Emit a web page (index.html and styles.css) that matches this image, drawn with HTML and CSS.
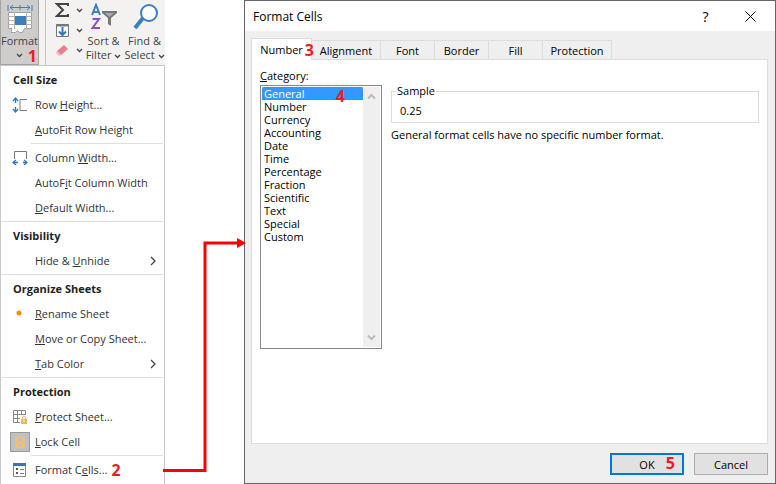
FILE: index.html
```html
<!DOCTYPE html>
<html lang="en">
<head>
  <meta charset="UTF-8">
  <meta name="viewport" content="width=device-width, initial-scale=1.0">
  <title>Format Cells</title>
  <link rel="stylesheet" href="styles.css">
</head>
<body>
  <div class="page">
    <div class="left">
      <!-- Ribbon -->
      <div class="ribbon">
        <button class="format-btn">
          <svg width="28" height="32" viewBox="0 0 28 32">
            <path d="M2 3v6M26 3v6M4 5.500h20M7 3L4 5.500 7 8M21 3l3 2.500L21 8M14 3v5" fill="none" stroke="#3c7ebf"/>
            <path d="M2.500 10.500h23v16h-7l-2 4h-3l-2-2-2 2H5l1-4H2.500z" fill="#fff" stroke="#a3a19f"/>
            <path d="M2 14.500h24M2 22.500h24M8.500 10v17M20.500 10v17M2 18.500h24" stroke="#b5b3b1"/>
            <path d="M9 14h11v9H9z" fill="#3c7ebf"/>
          </svg>
          <span>Format</span>
          <svg class="chev" width="7" height="5" viewBox="0 0 7 5"><path d="M1 1l2.500 2.500L6 1"/></svg>
          <b class="mark mark-1">1</b>
        </button>
        <div class="ribbon-tools">
          <button class="tool" aria-label="AutoSum">
            <svg width="15" height="16" viewBox="0 0 15 16"><path d="M13 4V2H2l6 6-6 6h11v-2" fill="none" stroke="#444" stroke-width="2"/></svg>
            <svg class="chev" width="7" height="5" viewBox="0 0 7 5"><path d="M1 1l2.500 2.500L6 1"/></svg>
          </button>
          <button class="tool" aria-label="Fill">
            <svg width="15" height="16" viewBox="0 0 15 16"><path d="M1.500 2.500h12v12h-12z" fill="#fff" stroke="#777"/><path d="M1.500 3.500h12" stroke="#777" stroke-width="2"/><path d="M7.500 5v8M4 9.500L7.500 13 11 9.500" fill="none" stroke="#2f78bd" stroke-width="2"/></svg>
            <svg class="chev" width="7" height="5" viewBox="0 0 7 5"><path d="M1 1l2.500 2.500L6 1"/></svg>
          </button>
          <button class="tool" aria-label="Clear">
            <svg width="15" height="16" viewBox="0 0 15 16"><path d="M2 9l7-6 4 4-7 6z" fill="#e8808c"/><path d="M2 9l4 4-2 1-3-3z" fill="#f3b4bb"/></svg>
            <svg class="chev" width="7" height="5" viewBox="0 0 7 5"><path d="M1 1l2.500 2.500L6 1"/></svg>
          </button>
        </div>
        <button class="big-tool">
          <svg width="28" height="28" viewBox="0 0 28 28">
            <path d="M2 12L6 2l4 10M3.500 9h5" fill="none" stroke="#3c7ebf" stroke-width="2"/>
            <path d="M2.500 16H9L2.500 25H10" fill="none" stroke="#8b4fbf" stroke-width="2"/>
            <path d="M12 8h15v2l-6 5v8l-3-2v-6l-6-5z" fill="#777"/><path d="M15 10h9l-4.500 4z" fill="#aaa"/>
          </svg>
          <span>Sort &amp;</span>
          <span>Filter <svg class="chev" width="7" height="5" viewBox="0 0 7 5"><path d="M1 1l2.500 2.500L6 1"/></svg></span>
        </button>
        <button class="big-tool">
          <svg width="28" height="28" viewBox="0 0 28 28">
            <path d="M12 15L4 25" stroke="#3c7ebf" stroke-width="4"/>
            <circle cx="18" cy="10" r="8" fill="#fff" stroke="#3c7ebf" stroke-width="2"/>
          </svg>
          <span>Find &amp;</span>
          <span>Select <svg class="chev" width="7" height="5" viewBox="0 0 7 5"><path d="M1 1l2.500 2.500L6 1"/></svg></span>
        </button>
      </div>

      <!-- Format menu -->
      <div class="menu" role="menu">
        <h2>Cell Size</h2>
        <button class="item" role="menuitem">
          <svg class="icon" width="16" height="16" viewBox="0 0 16 16"><path d="M15 2.500H8v11h7" fill="none" stroke="#777"/><path d="M3.500 2v4M1 4l2.500-3L6 4M3.500 14v-4M1 12l2.500 3L6 12" fill="none" stroke="#2f78bd" stroke-width="1.300"/></svg>
          <span>Row <u>H</u>eight...</span>
        </button>
        <button class="item" role="menuitem"><span><u>A</u>utoFit Row Height</span></button>
        <hr class="short">
        <button class="item" role="menuitem">
          <svg class="icon" width="16" height="16" viewBox="0 0 16 16"><path d="M2.500 9V1.500h12V9" fill="none" stroke="#777"/><path d="M2 12.500h4M4 10l-3 2.500L4 15M15 12.500h-4M12 10l3 2.500L12 15" fill="none" stroke="#2f78bd" stroke-width="1.300"/></svg>
          <span>Column <u>W</u>idth...</span>
        </button>
        <button class="item" role="menuitem"><span>AutoF<u>i</u>t Column Width</span></button>
        <button class="item" role="menuitem"><span><u>D</u>efault Width...</span></button>
        <hr>
        <h2>Visibility</h2>
        <button class="item" role="menuitem">
          <span>Hide &amp; <u>U</u>nhide</span>
          <svg class="arrow" width="7" height="10" viewBox="0 0 7 10"><path d="M1 1l4 4-4 4"/></svg>
        </button>
        <hr>
        <h2>Organize Sheets</h2>
        <button class="item" role="menuitem">
          <svg class="icon" width="16" height="16" viewBox="0 0 16 16"><circle cx="7" cy="7" r="2.500" fill="#ff8c00"/></svg>
          <span><u>R</u>ename Sheet</span>
        </button>
        <button class="item" role="menuitem"><span><u>M</u>ove or Copy Sheet...</span></button>
        <button class="item" role="menuitem">
          <span><u>T</u>ab Color</span>
          <svg class="arrow" width="7" height="10" viewBox="0 0 7 10"><path d="M1 1l4 4-4 4"/></svg>
        </button>
        <hr>
        <h2>Protection</h2>
        <button class="item" role="menuitem">
          <svg class="icon" width="16" height="16" viewBox="0 0 16 16"><path d="M1.500 1.500h12v12h-12zM1.500 5.500h12M1.500 9.500h12M5.500 1v13M9.500 1v13" fill="none" stroke="#888"/><path d="M8 6h8v10H8z" fill="#fff"/><path d="M9 10h6v5H9z" fill="#eab560"/><path d="M10.500 10V8q1.500-2 3 0v2" fill="none" stroke="#eab560"/><path d="M12 11v2" stroke="#fff"/></svg>
          <span><u>P</u>rotect Sheet...</span>
        </button>
        <button class="item" role="menuitem">
          <svg class="icon icon-on" width="18" height="18" viewBox="0 0 18 18"><path d="M4 8h10v7H4z" fill="#ecc07c"/><path d="M6 8V5q3-4 6 0v3" fill="none" stroke="#ecc07c" stroke-width="2"/><path d="M9 10v3" stroke="#c0c0c0" stroke-width="2"/></svg>
          <span><u>L</u>ock Cell</span>
        </button>
        <hr class="short">
        <button class="item" role="menuitem">
          <svg class="icon" width="16" height="16" viewBox="0 0 16 16"><path d="M1.500 1.500h12v13h-12z" fill="#fff" stroke="#888"/><path d="M1 1h13v3H1z" fill="#2f78bd"/><path d="M4 6h2v2H4zM4 10h2v2H4z" fill="#555"/><path d="M8 7.500h4M8 11.500h4" stroke="#777"/></svg>
          <span>Format C<u>e</u>lls...</span>
          <b class="mark mark-2">2</b>
        </button>
      </div>
    </div>

    <!-- Arrow from the menu to the dialog -->
    <div class="link">
      <svg class="link-arrow" width="83" height="236" viewBox="0 0 83 236">
        <path d="M0 232.500h42V5h33" fill="none" stroke="#f00" stroke-width="3"/>
        <path d="M74 0l9 5-9 5z" fill="#f00"/>
      </svg>
    </div>

    <!-- Dialog -->
    <div class="dialog" role="dialog" aria-labelledby="dialogTitle">
      <div class="titlebar">
        <h1 id="dialogTitle">Format Cells</h1>
        <button class="title-btn" aria-label="Help">?</button>
        <button class="title-btn" aria-label="Close">
          <svg width="11" height="11" viewBox="0 0 11 11"><path d="M.5.500l10 10M10.500.500l-10 10" stroke="#000"/></svg>
        </button>
      </div>
      <div class="content">
        <div class="tabs" role="tablist">
          <button class="tab active" role="tab" aria-selected="true">Number<b class="mark mark-3">3</b></button>
          <button class="tab tab-wide" role="tab">Alignment</button>
          <button class="tab" role="tab">Font</button>
          <button class="tab" role="tab">Border</button>
          <button class="tab" role="tab">Fill</button>
          <button class="tab tab-wide" role="tab">Protection</button>
        </div>
        <div class="panel" role="tabpanel">
          <div class="category">
            <label for="category"><u>C</u>ategory:</label>
            <div class="listbox">
              <select id="category" size="19">
                <option selected>General</option>
                <option>Number</option>
                <option>Currency</option>
                <option>Accounting</option>
                <option>Date</option>
                <option>Time</option>
                <option>Percentage</option>
                <option>Fraction</option>
                <option>Scientific</option>
                <option>Text</option>
                <option>Special</option>
                <option>Custom</option>
              </select>
              <div class="scroll">
                <svg width="9" height="7" viewBox="0 0 9 7"><path d="M1 5.500L4.500 2 8 5.500"/></svg>
                <svg width="9" height="7" viewBox="0 0 9 7"><path d="M1 1.500L4.500 5 8 1.500"/></svg>
              </div>
              <b class="mark mark-4">4</b>
            </div>
          </div>
          <div class="details">
            <fieldset>
              <legend>Sample</legend>
              <output>0.25</output>
            </fieldset>
            <p>General format cells have no specific number format.</p>
          </div>
        </div>
        <div class="actions">
          <button class="btn btn-ok">OK<b class="mark mark-5">5</b></button>
          <button class="btn">Cancel</button>
        </div>
      </div>
    </div>
  </div>
</body>
</html>
```
FILE: styles.css
```css
* { box-sizing: border-box; }
body {
  margin: 0;
  background: #fff;
  font-family: "Open Sans", "Noto Sans", sans-serif;
  font-size: 11px;
  color: #000;
}
button {
  margin: 0;
  padding: 0;
  border: none;
  background: none;
  font: inherit;
  color: inherit;
}
svg { flex: none; }
.page {
  display: flex;
  min-height: 100vh;
}
.left {
  width: 165px;
  flex: none;
  display: flex;
  flex-direction: column;
}

/* Ribbon */
.ribbon {
  display: flex;
  height: 65px;
  background: #f3f2f1;
  color: #444;
}
.format-btn {
  position: relative;
  width: 39px;
  display: flex;
  flex-direction: column;
  align-items: center;
  padding-top: 2px;
  background: #cfcdcb;
  border: 1px solid #a6a4a2;
  border-top: none;
  line-height: 14px;
}
.format-btn .chev {
  margin-top: 5px;
  margin-bottom: 7px;
}
.ribbon-tools {
  display: flex;
  flex-direction: column;
  gap: 4px;
  margin-left: 6px;
  padding: 2px 0 0 9px;
  border-left: 1px solid #c8c6c4;
}
.tool {
  display: flex;
  align-items: center;
  gap: 6px;
}
.big-tool {
  display: flex;
  flex-direction: column;
  align-items: center;
  flex: 1;
  padding-top: 3px;
  line-height: 14px;
  white-space: nowrap;
}
.big-tool > svg { margin-bottom: 3px; }
.chev path, .arrow path {
  fill: none;
  stroke: #444;
  stroke-width: 1.3;
}

/* Menu */
.menu {
  flex: 1;
  display: flex;
  flex-direction: column;
  padding: 1px 1px 0;
  border: 1px solid #c8c8c8;
  border-bottom: none;
  color: #333;
}
.menu h2 {
  margin: 0;
  padding-left: 11px;
  font-size: 11px;
  line-height: 25px;
  color: #222;
}
.item {
  display: flex;
  align-items: center;
  height: 25px;
  padding: 0 6px 0 33px;
  text-align: left;
  white-space: nowrap;
}
.item .icon { margin: 0 7px 0 -23px; }
.item .icon-on {
  margin: 0 6px 0 -24px;
  background: #c0c0c0;
  outline: 1px solid #999;
}
.item .arrow { margin-left: auto; }
.menu hr {
  width: 100%;
  margin: 1px 0;
  border: none;
  border-top: 1px solid #dedede;
}
.menu .short {
  width: auto;
  margin-left: 29px;
}

/* Numbered steps */
.mark {
  font-size: 16px;
  line-height: 16px;
  color: #ed1c24;
}
.mark-1 { position: absolute; right: 1px; bottom: 0; }
.mark-2 { margin-left: 4px; }
.mark-3 { position: absolute; right: -3px; top: 3px; }
.mark-4 { position: absolute; right: 36px; top: 2px; }
.mark-5 { position: absolute; right: 7px; top: 0; }

/* Arrow */
.link {
  position: relative;
  width: 79px;
  flex: none;
}
.link-arrow {
  position: absolute;
  left: -2px;
  top: 238px;
  z-index: 1;
}

/* Dialog */
.dialog {
  flex: 1;
  display: flex;
  flex-direction: column;
  background: #efefef;
  border: 1px solid #666;
}
.titlebar {
  display: flex;
  align-items: center;
  height: 30px;
  padding: 0 2px 0 8px;
  background: #fff;
}
.titlebar h1 {
  margin: 0 auto 0 0;
  font-size: 12px;
  font-weight: normal;
}
.title-btn {
  width: 45px;
  height: 30px;
  font-size: 14px;
}
.content {
  flex: 1;
  display: flex;
  flex-direction: column;
  padding: 7px 7px 8px 6px;
}
.tabs {
  display: flex;
  align-items: flex-end;
}
.tab {
  position: relative;
  width: 54px;
  height: 19px;
  border: 1px solid #dcdcdc;
  border-width: 1px 1px 0 0;
}
.tab-wide { width: 69px; }
.tab.active {
  z-index: 1;
  width: 61px;
  height: 22px;
  margin-bottom: -1px;
  border-left-width: 1px;
  background: #fff;
}
.panel {
  flex: 1;
  display: flex;
  gap: 9px;
  padding: 8px;
  background: #fff;
  border: 1px solid #dcdcdc;
}
.category { width: 122px; }
.category label {
  display: block;
  margin-bottom: 1px;
  line-height: 16px;
}
.listbox {
  position: relative;
  display: flex;
  height: 264px;
  padding: 1px;
  border: 1px solid #828790;
}
.listbox select {
  flex: 1;
  min-width: 0;
  height: 100%;
  padding: 0;
  border: none;
  outline: none;
  overflow: hidden;
  background: #fff;
  font: inherit;
  color: #000;
}
.listbox option {
  display: flex;
  align-items: center;
  height: 13px;
  min-height: 0;
  padding: 0 2px;
}
.listbox option:checked {
  background: linear-gradient(#3399ff, #3399ff);
  -webkit-text-fill-color: #fff;
  outline: 1px dotted #c66a18;
  outline-offset: -1px;
}
.scroll {
  width: 17px;
  display: flex;
  flex-direction: column;
  justify-content: space-between;
  align-items: center;
  padding: 6px 0;
  background: #efefef;
}
.scroll path {
  fill: none;
  stroke: #bbb;
  stroke-width: 2;
}
.details { flex: 1; }
fieldset {
  margin: 16px 0 0;
  padding: 6px 8px 4px;
  border: 1px solid #dcdcdc;
}
legend {
  margin-left: -4px;
  padding: 0 1px;
  line-height: 14px;
}
output {
  display: block;
  line-height: 14px;
}
.details p {
  margin: 4px 0 0;
  line-height: 15px;
}
.actions {
  display: flex;
  justify-content: flex-end;
  gap: 10px;
  padding-top: 9px;
}
.btn {
  position: relative;
  width: 74px;
  height: 22px;
  background: #e1e1e1;
  border: 1px solid #adadad;
}
.btn-ok { border: 2px solid #0078d7; }
```
